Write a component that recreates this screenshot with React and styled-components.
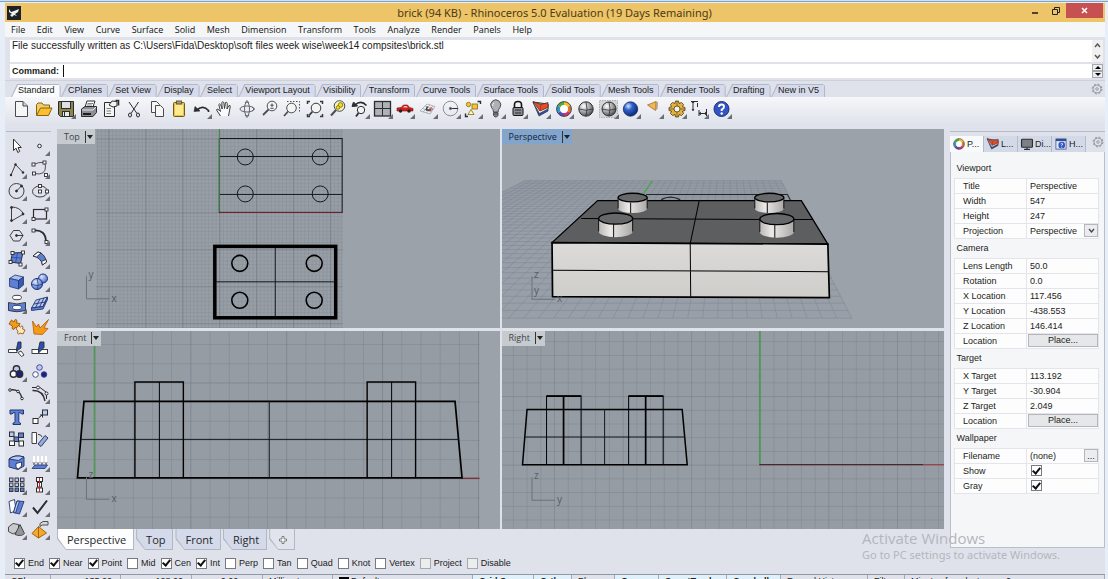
import React from "react";
import styled, { createGlobalStyle } from "styled-components";

const sans = `"Liberation Sans", Arial, sans-serif`;
const ui = `"Open Sans", "Noto Sans", sans-serif`;
const wide = `"Noto Sans", "Open Sans", sans-serif`;

const menuItems = [
  "File", "Edit", "View", "Curve", "Surface", "Solid", "Mesh", "Dimension",
  "Transform", "Tools", "Analyze", "Render", "Panels", "Help",
];

const toolTabs = [
  "Standard", "CPlanes", "Set View", "Display", "Select", "Viewport Layout",
  "Visibility", "Transform", "Curve Tools", "Surface Tools", "Solid Tools",
  "Mesh Tools", "Render Tools", "Drafting", "New in V5",
];

const snaps = [
  ["End", true], ["Near", true], ["Point", true], ["Mid", false],
  ["Cen", true], ["Int", true], ["Perp", false], ["Tan", false],
  ["Quad", false], ["Knot", false], ["Vertex", false],
  ["Project", false, true], ["Disable", false, true],
];

const statusCells = [
  { text: "CPlane", width: 46 },
  { text: "x 135.00", width: 70, align: "right" },
  { text: "y 128.00", width: 71, align: "right" },
  { text: "z 0.00", width: 71, align: "center" },
  { text: "Millimeters", width: 70 },
  { text: "Default", width: 140, swatch: true },
  { text: "Grid Snap", width: 61, on: true },
  { text: "Ortho", width: 38, on: true },
  { text: "Planar", width: 43 },
  { text: "Osnap", width: 44, on: true },
  { text: "SmartTrack", width: 68, on: true },
  { text: "Gumball", width: 54, on: true },
  { text: "Record History", width: 87 },
  { text: "Filter", width: 37 },
  { text: "Minutes from last save: 0", grow: true },
];

/* ---------- icons, all on a 22 x 22 field ---------- */

const ink = "#2b2d31";
const blue = "#5d80d6";
const pale = "#b9caf3";

const dots = (points, fill = "#fff") =>
  points.map(([x, y]) => (
    <rect key={`${x}-${y}`} x={x - 1.5} y={y - 1.5} width="3" height="3" fill={fill} stroke={ink} strokeWidth="0.9" />
  ));

const icons = {
  new: (
    <g fill="#f6f6f6" stroke="#4a4b4e">
      <path d="M5.5 3.5H13L17.5 8V18.5H5.5Z" />
      <path d="M13 3.5V8H17.5" fill="#cfd0d3" />
    </g>
  ),
  open: (
    <g stroke="#8a6414" strokeLinejoin="round">
      <path d="M3.5 17V6.5L5 5H9L10.5 7H16.5V10" fill="#f3cf63" />
      <path d="M3.5 17.5L7.5 10H19L15.5 17.5Z" fill="#f9bf2c" />
    </g>
  ),
  save: (
    <g stroke={ink}>
      <path d="M3.5 3.5H18.5V18.5H5.5L3.5 16.5Z" fill="#8c8648" />
      <rect x="6.5" y="3.5" width="9" height="7" fill="#dfe0e4" />
      <rect x="7.5" y="13.5" width="7" height="5" fill="#e9e9ec" />
      <path d="M9.5 14V18" />
    </g>
  ),
  print: (
    <g stroke={ink} strokeLinejoin="round">
      <path d="M7 9L9 3H17L15 9Z" fill="#fff" />
      <path d="M3.5 11L7 8.5H18.5V14.5L15 18.5H3.5Z" fill="#8d8f94" />
      <path d="M4 12H15L18 9" fill="none" stroke="#e8e8e8" />
      <path d="M5 16H13" stroke="#1c1c1c" strokeWidth="2" />
      <path d="M9.5 5.5H15M9 7H14" strokeWidth="0.6" />
    </g>
  ),
  properties: (
    <g stroke={ink} fill="#f4f4f4">
      <path d="M4.5 4.5H14.5V18.5H4.5Z" />
      <path d="M9 7L12 3L17 3.5V8L13 9L11 8Z" />
      <path d="M6.5 10.5H11M6.5 13H11M6.5 15.5H11" strokeWidth="0.6" />
      <path d="M15.5 2.5H18.5V7.5" strokeWidth="1.6" fill="none" />
    </g>
  ),
  cut: (
    <g fill="none" stroke={ink}>
      <path d="M6 4L14 15.5M15.5 4L8 15.5" />
      <ellipse cx="7" cy="17" rx="1.5" ry="2" />
      <ellipse cx="15" cy="17" rx="1.5" ry="2" />
    </g>
  ),
  copy: (
    <g stroke="#4a4b4e" fill="#f6f6f6">
      <path d="M5.5 3.5H10.5L13.5 6.5V14.5H5.5Z" />
      <path d="M9.5 7.5H14.5L17.5 10.5V18.5H9.5Z" />
    </g>
  ),
  paste: (
    <g stroke="#6d5a1c">
      <rect x="5.5" y="4.5" width="11" height="14" rx="1" fill="#e8c04a" />
      <rect x="7" y="6.5" width="8" height="10.5" fill="#fdea8c" stroke="none" />
      <rect x="8.5" y="3" width="5" height="3" fill="#9a9ca2" />
    </g>
  ),
  undo: (
    <g fill="none" stroke={ink} strokeWidth="1.7">
      <path d="M6 12Q12 6.5 17.5 12.5V14" />
      <path d="M3 13.5L4 8.5L9 13Z" fill={ink} strokeWidth="0.6" />
    </g>
  ),
  pan: (
    <path
      d="M7.5 18L3.5 12Q3.5 10 6 12L7.5 13.5L5.800 6.5Q6.5 5 7.8 7L9.2 11L8.8 4.5Q9.8 3 10.8 4.5L11.5 10.5L12.5 4.5Q13.8 3.5 14.3 5.5L14 11L16 7.5Q17.5 7 17.2 9L15.5 18"
      fill="#fafafa" stroke={ink} strokeWidth="0.9" strokeLinejoin="round"
    />
  ),
  rotate: (
    <g fill="none" stroke="#55575c" strokeWidth="0.9">
      <ellipse cx="11" cy="11" rx="7" ry="3" />
      <ellipse cx="11" cy="11" rx="2.5" ry="7" />
      <path d="M9 5L11 2.5L13 5M9 17L11 19.5L13 17M16 9L18.5 11L16 13" />
    </g>
  ),
  zoomDynamic: (
    <g fill="#f4f4f5" stroke="#4c4e52">
      <circle cx="13" cy="8" r="4.8" />
      <path d="M9.5 11.5L4 17" strokeWidth="1.8" />
      <path d="M13 5.5V9M11.3 7.2H14.7M11.3 10.3H14.7" />
    </g>
  ),
  zoomWindow: (
    <g fill="none" stroke="#4c4e52">
      <path d="M6 3.5H18.5V14" strokeDasharray="1.5 1.5" />
      <circle cx="10.5" cy="10" r="4.8" fill="#f4f4f5" />
      <path d="M7 13.5L3 18" strokeWidth="1.8" />
    </g>
  ),
  zoomExtents: (
    <g fill="none" stroke="#36383b">
      <circle cx="12" cy="10" r="4.8" fill="#f4f4f5" />
      <path d="M8.5 13.5L5 17.5" strokeWidth="1.8" />
      <path d="M3.5 6V3.5H6M16 3.5H18.5V6M18.5 16V18.5H16M3.5 16V18.5H6" strokeWidth="1.5" />
    </g>
  ),
  zoomSelected: (
    <g fill="none" stroke="#4c4e52">
      <circle cx="12.5" cy="8" r="5.3" fill="#f4f1c4" />
      <circle cx="13.5" cy="7" r="2.3" fill="#f5df16" stroke="#8f8314" />
      <circle cx="11" cy="9.5" r="1.8" fill="#f5df16" stroke="#8f8314" />
      <path d="M9 12L4 17.5" strokeWidth="2" />
    </g>
  ),
  undoView: (
    <g fill="none" stroke={ink}>
      <path d="M6 7Q12 1.5 17.5 7.5" strokeWidth="1.6" />
      <path d="M3 8.5L4.5 4L8.5 8Z" fill={ink} />
      <circle cx="12" cy="12" r="3.7" fill="#f4f4f5" />
      <path d="M9.5 15L7 18.5" strokeWidth="1.8" />
    </g>
  ),
  fourView: (
    <g fill="#aeb1b6" stroke={ink}>
      <rect x="2.5" y="3.5" width="16" height="14.5" strokeWidth="1.3" />
      <path d="M10.5 3.5V18M2.5 10.5H18.5" />
    </g>
  ),
  car: (
    <g>
      <path d="M3 12.5V10L7 9.5L9.5 7H13.5L15.5 9.5L19 10.5V13H3Z" fill="#d51f16" stroke="#7a120d" strokeWidth="0.6" />
      <path d="M9 9.5L10.2 8H12.8L13.8 9.5Z" fill="#f3c8c5" />
      <circle cx="6.5" cy="13" r="1.7" fill="#222" />
      <circle cx="15" cy="13" r="1.7" fill="#222" />
    </g>
  ),
  cplane: (
    <g fill="none" stroke="#a3a6ab" strokeWidth="0.8">
      <path d="M3 13L10 6L18 8.5L13 16ZM5.5 10.5L14.5 14M8 8L16 11.5M6 14L13 7M9.5 15L16 8" />
      <path d="M9 12L10.5 8.5M9 12H14" stroke="#37393d" strokeWidth="1.4" />
      <circle cx="14" cy="11" r="1.3" stroke="#c43" />
    </g>
  ),
  objectCircle: (
    <g fill="none" stroke="#8b8d92">
      <circle cx="10.5" cy="10.5" r="7.3" />
      <path d="M10.5 10.5H18" stroke={ink} />
      <circle cx="10.5" cy="10.5" r="1.2" fill={ink} />
    </g>
  ),
  select: (
    <g stroke="#8a6a10" strokeWidth="0.8" fill="#f4c531">
      <circle cx="6.5" cy="6.5" r="2.2" />
      <rect x="10" y="6" width="5.5" height="5" />
      <path d="M6 16.5L9 11.5L12 16.5Z" fill="#fff2c9" />
      <path d="M15.5 3.5H18.5V6M3.5 15.5V18.5H6" fill="none" stroke={ink} strokeWidth="1.4" />
    </g>
  ),
  bulb: (
    <g stroke="#4d4f53">
      <path d="M8.5 14Q8.5 11.5 6.5 9.5A5 5 0 1 1 15 9.5Q13 11.5 13 14Z" fill="#aeb0b4" />
      <path d="M8.5 14.5H13V17.5L11.5 19H10L8.5 17.5ZM8.5 16H13" fill="#85878b" />
      <path d="M9 5Q7.5 6 7.7 8" fill="none" stroke="#f5f5f5" />
    </g>
  ),
  lock: (
    <g stroke="#151515">
      <path d="M7.5 10V6.5Q7.5 3.5 11 3.5T14.5 6.5V10" fill="none" strokeWidth="1.6" />
      <rect x="6" y="9.5" width="10" height="8" rx="1" fill="#8b8d92" />
      <path d="M8 12H14M8 15H14" strokeWidth="0.8" />
    </g>
  ),
  layers: (
    <g stroke={ink} strokeWidth="0.7" strokeLinejoin="round">
      <path d="M3 4L9 18L18 13V6Z" fill="#2f4fb4" />
      <path d="M3 4.5L9.5 15.5L18 11V6Z" fill="#f6f2ef" />
      <path d="M3 3.5L11 6.5L18 4.5V9.5L10 13Z" fill="#ea4a25" />
      <path d="M11 6.5L10 12.5" stroke="#a12c10" />
    </g>
  ),
  colorWheel: (
    <g fill="none" strokeWidth="3.4">
      <path d="M11 5.5A5.5 5.5 0 0 1 15.8 8.3" stroke="#f0c419" />
      <path d="M15.8 8.3A5.5 5.5 0 0 1 15.8 13.8" stroke="#e2712a" />
      <path d="M15.8 13.8A5.5 5.5 0 0 1 11 16.5" stroke="#d22f72" />
      <path d="M11 16.5A5.5 5.5 0 0 1 6.2 13.8" stroke="#5a4ac0" />
      <path d="M6.2 13.8A5.5 5.5 0 0 1 6.2 8.3" stroke="#2b9bd0" />
      <path d="M6.2 8.3A5.5 5.5 0 0 1 11 5.5" stroke="#49ad3a" />
      <circle cx="11" cy="11" r="7.4" stroke="#333" strokeWidth="0.9" />
      <circle cx="11" cy="11" r="3.9" fill="#fff" stroke="none" />
    </g>
  ),
  sphere: (
    <g>
      <circle cx="11" cy="11" r="7.2" fill="url(#ball)" stroke="#333" />
      <path d="M4 11Q11 13.5 18 11M11 4Q13 11 11 18" fill="none" stroke="#333" strokeWidth="0.8" />
    </g>
  ),
  sphereBox: (
    <g>
      <rect x="1.5" y="2.5" width="18" height="17" fill="#d3d5d9" stroke="#a9acb2" strokeDasharray="1.5 1" />
      <circle cx="11" cy="11" r="7" fill="url(#ball)" stroke="#333" />
      <path d="M4 11Q11 13.5 18 11M11 4Q13 11 11 18" fill="none" stroke="#333" strokeWidth="0.8" />
    </g>
  ),
  sphereBlue: <circle cx="10.5" cy="11" r="7.2" fill="url(#ballBlue)" stroke="#122a66" strokeWidth="0.8" />,
  spot: (
    <g>
      <path d="M4.5 7L13 3.5L12.5 12.5Z" fill="#f4b64e" stroke="#8c6423" strokeWidth="0.7" />
      <path d="M13 3L15 4.5L14.5 11L12.5 12.5Z" fill="#b5a284" />
    </g>
  ),
  gear: (
    <g stroke="#4e3a0d" strokeWidth="0.8">
      <path
        d="M9.5 3H12.5L13 5.5L15.5 4.5L17.5 6.5L16.5 8.8L19 9.5V12.5L16.5 13L17.5 15.5L15.5 17.5L13 16.5L12.5 19H9.5L9 16.5L6.5 17.5L4.5 15.5L5.5 13L3 12.5V9.5L5.5 8.8L4.5 6.5L6.5 4.5L9 5.5Z"
        fill="#e3b23c"
      />
      <path d="M3 11H19M11 3V19" stroke="#7a5d18" />
      <circle cx="11" cy="11" r="3" fill="#f3f3f3" />
    </g>
  ),
  dimension: (
    <g fill="none" stroke={ink}>
      <path d="M3 3.5H10M5 3.5V12M9.5 5V9M11 12V18M11 15.5H19M18.5 11V18" />
      <path d="M4 5L5 3L6 5M4 11L5 13L6 11M13 14L11 15.5L13 17M17 14L19 15.5L17 17" fill={ink} strokeWidth="0.6" />
    </g>
  ),
  help: (
    <g>
      <circle cx="10.5" cy="11" r="7.5" fill="#3355c4" stroke="#1c2f77" />
      <path d="M8 9Q8 6.5 10.5 6.5T13 8.8Q13 10.5 10.7 11.5V13" fill="none" stroke="#fff" strokeWidth="1.9" />
      <circle cx="10.7" cy="15.5" r="1.2" fill="#fff" />
    </g>
  ),

  arrow: <path d="M7.5 4L7.5 15.5L10 13.2L11.8 17.5L13.7 16.5L12 12.5H15.3Z" fill="#fff" stroke="#333" />,
  point: <circle cx="10.5" cy="11" r="1.8" fill="#fff" stroke={ink} />,
  polyline: (
    <g fill={ink}>
      <path d="M5 17L9.5 6.5L17 14.5" fill="none" stroke={ink} strokeWidth="0.9" />
      <circle cx="5" cy="17" r="1.2" />
      <circle cx="9.5" cy="6.5" r="1.2" />
      <circle cx="17" cy="14.5" r="1.2" />
    </g>
  ),
  curve: (
    <g fill="none" stroke={ink}>
      <path d="M4.5 6.5Q16 1.5 16.5 8Q17 18 5 15.5" strokeWidth="0.8" />
      {dots([[4.5, 6.5], [15.5, 4.5], [17, 17], [5, 15.5]])}
    </g>
  ),
  circle: (
    <g fill="none" stroke={ink} strokeWidth="0.9">
      <circle cx="10.5" cy="11" r="7.5" />
      <path d="M10.5 11L15.5 6" />
      <circle cx="10.5" cy="11" r="1" fill={ink} />
      <circle cx="15.5" cy="6" r="1" fill={ink} />
    </g>
  ),
  ellipse: (
    <g fill="none" stroke={ink}>
      <ellipse cx="11" cy="11.5" rx="7.5" ry="5.5" strokeWidth="0.9" />
      {dots([[11, 6], [11, 11.5], [18, 11.5]])}
    </g>
  ),
  arc: (
    <g fill="none" stroke={ink} strokeWidth="0.9">
      <path d="M5.5 4Q14 4 17.5 11L5.5 18Z" />
      <circle cx="5.5" cy="4.5" r="1" fill={ink} />
      <circle cx="17" cy="11" r="1" fill={ink} />
      <circle cx="5.5" cy="17.5" r="1" fill={ink} />
    </g>
  ),
  rectangle: (
    <g fill="none" stroke={ink}>
      <rect x="4.5" y="6.5" width="13" height="9.5" strokeWidth="1.2" />
      {dots([[17.5, 6.5], [4.5, 16]])}
    </g>
  ),
  polygon: (
    <g fill="none" stroke={ink} strokeWidth="0.9">
      <path d="M4 10.5L7.5 5.5H13.5L17 10.5L13.5 16H7.5Z" />
      <path d="M10.5 10.5H17" />
      <circle cx="10.5" cy="10.5" r="1" fill={ink} />
    </g>
  ),
  fillet: (
    <g fill="none" stroke={ink}>
      <path d="M5 5.5Q16.5 4.5 17 16.5" strokeWidth="1.8" />
      {dots([[4.5, 5.5], [17.5, 17]])}
    </g>
  ),
  surface: (
    <g stroke={ink}>
      <path d="M6.5 5L17 4.5L14.5 15.5L4.5 14Z" fill={blue} />
      <path d="M5.5 9.5L16 10M11.5 5L9.5 15" stroke="#27408a" strokeWidth="0.7" />
      {dots([[6.5, 5], [17, 4.5], [14.5, 16.5], [4.5, 14]])}
    </g>
  ),
  surfaceCurve: (
    <g stroke={ink} strokeWidth="0.9">
      <path d="M4 8L9 4Q15.5 5 17.5 14L13.5 17Q12 9.5 4 8Z" fill={blue} />
      <path d="M4 8L9 4L12 5L7.5 9Z" fill="#fff" />
      <path d="M13.5 17L12.5 13.5L17 11.5L17.5 14Z" fill="#fff" />
    </g>
  ),
  box: (
    <g stroke="#22366f" strokeWidth="0.8" strokeLinejoin="round">
      <path d="M3.5 7.5L9 4L17.5 6L12.5 9.5Z" fill="#a9c0f5" />
      <path d="M3.5 7.5L12.5 9.5V18L3.5 15.5Z" fill={blue} />
      <path d="M12.5 9.5L17.5 6V14L12.5 18Z" fill="#3859b0" />
    </g>
  ),
  union: (
    <g stroke="#1c3478">
      <circle cx="14" cy="7.500" r="4.5" fill="url(#ballSoft)" />
      <circle cx="8" cy="13" r="5.5" fill="url(#ballSoft)" />
      <path d="M3 13.5Q8 16 13.5 13M8 7.5Q10 13 8.5 18.5" fill="none" strokeWidth="0.7" />
    </g>
  ),
  project: (
    <g stroke={ink} strokeWidth="0.9">
      <ellipse cx="11" cy="4.5" rx="4.5" ry="2.2" fill="#fff" />
      <path d="M2.5 9.5Q11 12.5 19.5 9.5V17.5Q11 20 2.5 17.5Z" fill={blue} />
      <ellipse cx="11" cy="14.5" rx="4.5" ry="2.2" fill="#fff" stroke="#22366f" />
    </g>
  ),
  mesh: (
    <g stroke="#22366f" strokeWidth="0.9">
      <path d="M2.5 15L7 7L18.5 4L14 13.5Z" fill={pale} />
      <path d="M5 11L16 9M6.5 14.5L11 6M10.5 14L15 5" fill="none" />
      <path d="M2.5 15V17.5L14 16L18.5 6.5V4L14 13.5Z" fill={blue} />
    </g>
  ),
  puzzle: (
    <g stroke="#8a4b05" strokeWidth="0.8">
      <path d="M3 8L5.5 4L8 6Q9 2 11 4.5L10.5 7L14 7.5L12 12L9 11.5Q8 15 6 12.5L6.5 10Z" fill="#f39a16" />
      <path d="M10 13L12 9.5L14.5 11Q16.5 8.5 17 11L16.5 13L19 14L17 18L14 17Q12.500 19.5 11.5 17L12 15Z" fill="#fde9bd" />
    </g>
  ),
  explode: <path d="M5 18L3.500 5L7.5 11L9.5 8L11 12L19.5 3.5L15 12L19 12.5L13.5 18.5Z" fill="#f39a16" stroke="#b85a08" strokeWidth="0.8" />,
  trim: (
    <g stroke={ink} strokeWidth="0.9">
      <path d="M2.5 11.5H11V14.5H2.5Z" fill="#fff" />
      <path d="M12 4H15V10L10.5 13V11Z" fill="#2c4fb4" />
      <path d="M12 14.5L15 13L18 17L15.5 18.5Z" fill="#fff" />
    </g>
  ),
  split: (
    <g stroke={ink} strokeWidth="0.9">
      <rect x="3" y="11.5" width="15.5" height="4" fill="#fff" />
      <path d="M11 4H15V9.5L9.5 15V11Z" fill="#2c4fb4" />
    </g>
  ),
  group: (
    <g stroke={ink} strokeWidth="1.4">
      <circle cx="10.5" cy="8" r="3.2" fill={pale} />
      <circle cx="7.5" cy="13" r="3.2" fill="#fff" />
      <circle cx="13.5" cy="13" r="3.2" fill="#1a237e" />
    </g>
  ),
  ungroup: (
    <g stroke="#3b3e8f" strokeWidth="0.9">
      <circle cx="10.5" cy="6.5" r="2.8" fill={pale} />
      <circle cx="6.5" cy="13.5" r="2.8" fill="#fff" />
      <circle cx="15" cy="13.5" r="2.8" fill="#1a237e" />
    </g>
  ),
  editPoints: (
    <g fill="#fff" stroke={ink}>
      <path d="M3.5 7Q14 5 16 16" fill="none" strokeWidth="1.4" />
      <circle cx="4" cy="7" r="1.3" />
      <circle cx="12" cy="8.5" r="1.3" />
      <circle cx="16" cy="15.5" r="1.3" />
    </g>
  ),
  controlPoints: (
    <g fill="#fff" stroke={ink}>
      <path d="M3.5 7.5Q14 7 16 18" fill="none" strokeWidth="1.4" />
      <path d="M3 4.5H7M11 4.5L17 9M17.500 12V16" fill="none" />
      <circle cx="9" cy="4.5" r="1.5" />
      <circle cx="17.5" cy="10.5" r="1.5" />
    </g>
  ),
  text: <path d="M4 4H17.5V8H15.5Q15 6.5 12.8 6.5V15.5Q13 17 14.5 17V18.5H7V17Q9 17 9 15.5V6.5Q6.5 6.5 6 8H4Z" fill={blue} stroke="#22366f" />,
  move: (
    <g stroke={ink}>
      <rect x="4" y="12.5" width="5" height="5" fill="#fff" />
      <rect x="13.5" y="4" width="5" height="5" fill={pale} />
      <path d="M9.5 12L13 9" />
      <path d="M11 9H13.5V11.500" fill="none" />
    </g>
  ),
  copyObjects: (
    <g stroke={ink}>
      <rect x="3.5" y="4" width="4.5" height="4.5" fill={pale} />
      <rect x="12.5" y="5" width="5" height="4.5" fill={blue} />
      <rect x="8" y="9" width="4.5" height="4.5" fill={blue} />
      <rect x="3.5" y="13" width="5" height="4.5" fill="#fff" />
      <rect x="13" y="13" width="4.5" height="5" fill="#fff" />
    </g>
  ),
  rotateObject: (
    <g stroke={ink} strokeWidth="0.9">
      <path d="M3 4.5H7.5V15.5H3Z" fill="#fff" />
      <path d="M9 16L16 7.5L19 10L12 18.5Z" fill="#8fabec" />
      <path d="M9 6.5Q12 6 13 9" fill="none" />
    </g>
  ),
  solidEdit: (
    <g stroke="#1c2c60" strokeWidth="0.9">
      <path d="M3 8Q9 3 18 6V15L12 18.5L3 16Z" fill={blue} />
      <path d="M3 8Q9 3 18 6L12.5 9.5Z" fill={pale} />
      <path d="M10 12.5L15.5 11V15L12.500 18L10 16.5Z" fill="#fff" />
    </g>
  ),
  flow: (
    <g>
      <path d="M3 17.5L6 14H18.5L16 17.5Z" fill={blue} stroke="#22366f" strokeWidth="0.8" />
      <path d="M5 5V13M9 5V13M13 5V13M17 5V13" stroke="#fff" strokeWidth="2" />
      <path d="M4 11L5 14L6 11M8 11L9 14L10 11M12 11L13 14L14 11M16 11L17 14L18 11" stroke="#555" strokeWidth="0.7" fill="none" />
    </g>
  ),
  array: (
    <g stroke={ink} strokeWidth="0.9">
      {[4, 9, 14].map((y) =>
        [3.5, 9, 14.5].map((x) => (
          <rect key={`${x}-${y}`} x={x} y={y} width="3.5" height="3.5" fill={y === 14 ? blue : pale} />
        ))
      )}
    </g>
  ),
  align: (
    <g stroke={ink}>
      <rect x="7.5" y="3.5" width="6" height="4" fill="#fff" />
      <rect x="8.5" y="8.5" width="4" height="4.5" fill="#fff" />
      <rect x="7.5" y="14" width="6" height="4" fill="#fff" />
      <path d="M10.5 4V18" stroke="#d02424" />
    </g>
  ),
  sheets: (
    <g stroke="#22366f" strokeWidth="0.9">
      <path d="M3 5.5L8.5 3.5L10 14.5L4.5 17Z" fill="#fff" />
      <path d="M11 5L18 5.5L13.5 18L7.5 16.5Z" fill={blue} />
      <path d="M11 5L13.500 5.2L9.5 17L7.500 16.5Z" fill={pale} />
    </g>
  ),
  check: <path d="M4 11.5L8.5 17L18 4.5" fill="none" stroke={ink} strokeWidth="2" />,
  solids: (
    <g stroke="#3a3b3e" strokeWidth="0.9">
      <path d="M2.5 8L7 4.5L12.5 5.5V12L7 15L2.5 12.5Z" fill="#c9cacd" />
      <path d="M14 5.5L18.5 14.5Q15 18 9 15.5Z" fill="#93959a" />
    </g>
  ),
  render: (
    <g stroke="#4d4f53">
      <path d="M3 14.5L9.5 7.5L17.5 14L9.5 19Z" fill="#f3a92f" stroke="#a76508" />
      <path d="M9.5 7.5V19" stroke="#a76508" />
      <path d="M11 4.5L14 2.5H19V6H13L11 7.5Z" fill="#d6d8dc" />
    </g>
  ),
  monitor: (
    <g>
      <rect x="3.5" y="4.5" width="15" height="11" rx="1" fill="#7d8187" stroke={ink} strokeWidth="1.6" />
      <path d="M7 18.5H15M11 16V18" stroke={ink} strokeWidth="1.6" />
    </g>
  ),
  helpPage: (
    <g>
      <rect x="4" y="4" width="14" height="14" fill="#dfe6f6" stroke="#31508f" />
      <rect x="4" y="4" width="14" height="3" fill="#31508f" />
      <rect x="7.5" y="8" width="9" height="9" rx="4" fill="#3355c4" />
      <path d="M10.5 11Q12 9 13.5 11L12 13V14M12 15V16" fill="none" stroke="#fff" strokeWidth="1.2" />
    </g>
  ),
};

// second value: has a fly-out marker in the corner
const mainTools = [
  ["new"], ["open"], ["save", 1], ["print"], ["properties"], ["cut"], ["copy"],
  ["paste"], ["undo", 1], ["pan"], ["rotate"], ["zoomDynamic"], ["zoomWindow"],
  ["zoomExtents"], ["zoomSelected"], ["undoView", 1], ["fourView", 1],
  ["car", 1], ["cplane", 1], ["objectCircle", 1], ["select", 1], ["bulb", 1],
  ["lock", 1], ["layers", 1], ["colorWheel", 1], ["sphere"], ["sphereBox", 1],
  ["sphereBlue", 1], ["spot", 1], ["gear", 1], ["dimension", 1], ["help", 1],
];

const sideTools = [
  ["arrow"], ["point", 1], ["polyline", 1], ["curve", 1], ["circle", 1],
  ["ellipse", 1], ["arc", 1], ["rectangle", 1], ["polygon", 1], ["fillet", 1],
  ["surface", 1], ["surfaceCurve", 1], ["box", 1], ["union", 1],
  ["project", 1], ["mesh", 1], ["puzzle"], ["explode"], ["trim"], ["split"],
  ["group", 1], ["ungroup"], ["editPoints"], ["controlPoints", 1], ["text"],
  ["move", 1], ["copyObjects"], ["rotateObject"], ["solidEdit", 1],
  ["flow", 1], ["array", 1], ["align", 1], ["sheets", 1], ["check", 1],
  ["solids", 1], ["render", 1],
];

const Icon = ({ name, flyout, size = 22 }) => (
  <svg width={size} height={size} viewBox="0 0 22 22" aria-hidden="true">
    {icons[name]}
    {flyout && <path d="M21 16V21H16Z" fill="#6b6e74" />}
  </svg>
);

const Gear = () => (
  <svg width="12" height="12" viewBox="0 0 12 12" fill="none" stroke="#8a8e95">
    <circle cx="6" cy="6" r="4.9" strokeDasharray="2 1.85" />
    <circle cx="6" cy="6" r="4" strokeWidth="0.8" />
    <circle cx="6" cy="6" r="1.3" strokeWidth="0.8" />
  </svg>
);

/* ---------- viewport drawings ---------- */

const Axes = ({ x, y, up, across, inner }) => (
  <g>
    <path d={`M${x} ${y - 23}V${y}H${x + 23}`} fill="none" stroke="#6b727b" />
    <AxisText x={x + 2} y={y - 21}>{up}</AxisText>
    {inner && <AxisText x={x + 2} y={y - 5}>{inner}</AxisText>}
    <AxisText x={x + 25} y={y + 3}>{across}</AxisText>
  </g>
);

const GridPattern = ({ id, x, y, step, major, minorOpacity }) => (
  <defs>
    <pattern id={`${id}-minor`} x={x} y={y} width={step} height={step} patternUnits="userSpaceOnUse">
      <path d={`M0 0V${step}M0 0H${step}`} stroke="#5d656f" strokeWidth="1" opacity={minorOpacity} />
    </pattern>
    <pattern id={`${id}-major`} x={x} y={y} width={major} height={major} patternUnits="userSpaceOnUse">
      <path d={`M0 0V${major}M0 0H${major}`} stroke="#4d555f" strokeWidth="1.2" opacity="0.5" />
    </pattern>
  </defs>
);

const TopDrawing = () => (
  <Drawing viewBox="57 129 443 230">
    <GridPattern id="top" x={219.5} y={212.5} step={3.7} major={37} minorOpacity={0.3} />
    <rect x="96" y="129" width="247" height="230" fill="#979ea6" />
    <rect x="96" y="129" width="247" height="230" fill="url(#top-minor)" />
    <rect x="96" y="129" width="247" height="230" fill="url(#top-major)" />
    <g fill="none" stroke="#15171a">
      <rect x="219.5" y="138.5" width="123" height="74" />
      <path d="M219.5 156.5H342.5M219.5 194.5H342.5" />
      {[245.5, 320.5].map((x) => [157, 194].map((y) => <circle key={`${x}-${y}`} cx={x} cy={y} r="8" />))}
      <path d="M219.5 129V212" stroke="#3d8a45" />
      <path d="M220 212.5H342" stroke="#6e2a30" />
      <rect x="215" y="246.5" width="121" height="71.5" strokeWidth="3.5" stroke="#000" />
      <path d="M275.5 248V317M216 282H335" />
      {[240, 314.5].map((x) =>
        [263.5, 300.5].map((y) => <circle key={`${x}-${y}`} cx={x} cy={y} r="8" strokeWidth="1.6" stroke="#000" />)
      )}
    </g>
    <Axes x={86.5} y={299} up="y" across="x" />
  </Drawing>
);

const FrontDrawing = () => (
  <Drawing viewBox="57 331 443 230">
    <GridPattern id="front" x={94.5} y={478.5} step={19.2} major={96} minorOpacity={0.45} />
    <rect x="57" y="331" width="423" height="230" fill="#959ca4" />
    <rect x="57" y="331" width="423" height="230" fill="url(#front-minor)" />
    <rect x="57" y="331" width="423" height="230" fill="url(#front-major)" opacity="0.5" />
    <path d="M94.500 331V478" stroke="#4a9a50" strokeWidth="1.5" />
    <path d="M462 478.5H480" stroke="#7d333b" strokeWidth="1.4" />
    <g fill="none" stroke="#000">
      <path d="M84 401.5H455.5L462.5 478H77.5Z" strokeWidth="1.7" />
      <path d="M80.5 439.5H459M269.5 401V478" stroke="#15171a" />
      {[135, 367.5].map((x) => (
        <g key={x}>
          <path d={`M${x} 478V382H${x + 48.5}V478`} strokeWidth="1.4" />
          <path d={`M${x + 24.5} 382V478`} />
        </g>
      ))}
    </g>
    <Axes x={86.5} y={499.5} up="z" across="x" />
  </Drawing>
);

const RightDrawing = () => (
  <Drawing viewBox="502 331 442 230">
    <GridPattern id="right" x={759.5} y={464.5} step={13.7} major={68.5} minorOpacity={0.45} />
    <rect x="502" y="331" width="442" height="230" fill="#959ca4" />
    <rect x="502" y="331" width="442" height="230" fill="url(#right-minor)" />
    <rect x="502" y="331" width="442" height="230" fill="url(#right-major)" opacity="0.3" />
    <path d="M759.5 331V464" stroke="#4a9a50" strokeWidth="1.7" />
    <path d="M759 464.5H923" stroke="#4f262d" strokeWidth="1.3" />
    <path d="M923 464.5H944" stroke="#9c444c" strokeWidth="1.3" />
    <g fill="none" stroke="#000">
      <path d="M527 409.5H682L687 464.5H522.5Z" strokeWidth="1.5" />
      <path d="M525 437H684.5M604.5 409V464" stroke="#15171a" />
      {[546.5, 628.5].map((x) => (
        <g key={x}>
          <path d={`M${x} 464V396H${x + 34.5}V464`} />
          <path d={`M${x} 396H${x + 34.5}M${x + 17} 396V464`} strokeWidth="1.7" />
        </g>
      ))}
    </g>
    <Axes x={532} y={500} up="z" across="y" />
  </Drawing>
);

// ground plane in one point perspective, eye line at y = 77
const eye = { x: 728, y: 77 };
const far = 103.5;
const near = 241;
const cells = 40;

const groundLines = () => {
  const lines = [];
  for (let i = 0; i <= cells; i++) {
    const x = 525 + (256 * i) / cells;
    const k = near / far;
    lines.push(`M${x} ${eye.y + far}L${eye.x + (x - eye.x) * k} ${eye.y + near}`);
    const t = 1 / (1 / far + ((1 / near - 1 / far) * i) / cells);
    const left = eye.x + ((525 - eye.x) * t) / far;
    const right = eye.x + ((781 - eye.x) * t) / far;
    lines.push(`M${left} ${eye.y + t}H${right}`);
  }
  return lines.join("");
};

const studs = [
  { x: 632.5, y: 197.5, rx: 14.5, ry: 4.3, h: 11 },
  { x: 769, y: 197.5, rx: 14.5, ry: 4.3, h: 11 },
  { x: 615.5, y: 218.5, rx: 17, ry: 5.6, h: 13 },
  { x: 776.5, y: 219, rx: 17, ry: 5.6, h: 13 },
];

const PerspectiveDrawing = () => (
  <Drawing viewBox="502 129 442 230">
    <defs>
      <linearGradient id="stud" x1="0" x2="1">
        <stop offset="0" stopColor="#b9b8b7" />
        <stop offset="0.35" stopColor="#eceae8" />
        <stop offset="1" stopColor="#a9a8a7" />
      </linearGradient>
      <linearGradient id="face" x1="0" x2="0" y1="0" y2="1">
        <stop offset="0" stopColor="#dddbd9" />
        <stop offset="1" stopColor="#cfcdca" />
      </linearGradient>
    </defs>
    <path d="M525 180.5H781L852 318H255Z" fill="#989fa8" />
    <path d={groundLines()} stroke="#747c86" strokeWidth="0.6" opacity="0.6" fill="none" />
    <path d="M652 181L643 194" stroke="#4ca550" strokeWidth="1.5" />
    <g fill="none" stroke="#23262a">
      <path d="M646 194.5H787L790 200" />
      <path d="M661 199.5Q670 194.5 680 199.5" strokeWidth="1.3" />
    </g>
    <path d="M597.5 200.5L801 200.5L827.5 244L552 242.5Z" fill="#5d5e60" stroke="#000" strokeWidth="1.3" />
    <path d="M552 242.5L827.5 244L829 297.5L552.5 296.5Z" fill="url(#face)" stroke="#000" strokeWidth="1.7" />
    <path d="M581 218.5L812 219.5M699 200.5L690 243.5L690.5 297M552 270L828.5 271.5" fill="none" stroke="#000" />
    {studs.map(({ x, y, rx, ry, h }) => (
      <g key={`${x}-${y}`}>
        <path d={`M${x - rx} ${y}V${y + h}A${rx} ${ry} 0 0 0 ${x + rx} ${y + h}V${y}Z`} fill="url(#stud)" />
        <path d={`M${x - rx} ${y}V${y + h}M${x + rx} ${y}V${y + h}M${x - 2} ${y + 5}V${y + h + ry}`} stroke="#111" />
        <ellipse cx={x} cy={y} rx={rx} ry={ry} fill="#67686a" stroke="#000" strokeWidth="1.3" />
      </g>
    ))}
    <Axes x={532} y={299} up="z" across="x" inner="y" />
  </Drawing>
);

const View = ({ title, active, children }) => (
  <ViewBox>
    {children}
    <ViewLabel $active={active}>
      {title}
      <ViewArrow />
    </ViewLabel>
  </ViewBox>
);

/* ---------- properties panel ---------- */

const sections = [
  {
    title: "Viewport",
    rows: [
      ["Title", "Perspective"],
      ["Width", "547"],
      ["Height", "247"],
      ["Projection", "Perspective", "select"],
    ],
  },
  {
    title: "Camera",
    rows: [
      ["Lens Length", "50.0"],
      ["Rotation", "0.0"],
      ["X Location", "117.456"],
      ["Y Location", "-438.553"],
      ["Z Location", "146.414"],
      ["Location", "Place...", "button"],
    ],
  },
  {
    title: "Target",
    rows: [
      ["X Target", "113.192"],
      ["Y Target", "-30.904"],
      ["Z Target", "2.049"],
      ["Location", "Place...", "button"],
    ],
  },
  {
    title: "Wallpaper",
    rows: [
      ["Filename", "(none)", "file"],
      ["Show", "", "check"],
      ["Gray", "", "check"],
    ],
  },
];

const Value = ({ id, label, value, kind }) => {
  if (kind === "select")
    return (
      <SelectBox>
        <PropSelect id={id} defaultValue={value}>
          <option>{value}</option>
        </PropSelect>
        <SelectMark>
          <svg width="7" height="5" viewBox="0 0 7 5"><path d="M1 1L3.5 4L6 1" fill="none" stroke="#444" strokeWidth="1.3" /></svg>
        </SelectMark>
      </SelectBox>
    );
  if (kind === "button") return <PlaceButton id={id}>{value}</PlaceButton>;
  if (kind === "check") return <Check id={id} type="checkbox" defaultChecked />;
  if (kind === "file")
    return (
      <FileBox>
        <PropInput id={id} defaultValue={value} />
        <BrowseButton aria-label={`Browse ${label}`}>...</BrowseButton>
      </FileBox>
    );
  return <PropInput id={id} defaultValue={value} />;
};

const Properties = () => (
  <Panel>
    <PanelTabs>
      <PanelTab $active><Icon name="colorWheel" size={16} />P...</PanelTab>
      <PanelTab><Icon name="layers" size={16} />L...</PanelTab>
      <PanelTab><Icon name="monitor" size={16} />Di...</PanelTab>
      <PanelTab><Icon name="helpPage" size={16} />H...</PanelTab>
      <GearButton aria-label="Panel options"><Gear /></GearButton>
    </PanelTabs>
    <PanelBody>
      <PropTable>
        {sections.map((section) => (
          <tbody key={section.title}>
            <tr>
              <SectionCell colSpan="2" scope="rowgroup">{section.title}</SectionCell>
            </tr>
            {section.rows.map(([label, value, kind]) => {
              const id = `${section.title}-${label}`.replace(" ", "-");
              return (
                <tr key={label}>
                  <NameCell scope="row"><label htmlFor={id}>{label}</label></NameCell>
                  <ValueCell><Value id={id} label={label} value={value} kind={kind} /></ValueCell>
                </tr>
              );
            })}
          </tbody>
        ))}
      </PropTable>
    </PanelBody>
  </Panel>
);

const App = () => {
  return (
    <Desktop>
      <GlobalStyle />
      <Shades width="0" height="0">
        <defs>
          <radialGradient id="ball" cx="0.35" cy="0.3" r="0.8">
            <stop offset="0" stopColor="#fff" />
            <stop offset="0.5" stopColor="#a3a5a9" />
            <stop offset="1" stopColor="#3a3b3e" />
          </radialGradient>
          <radialGradient id="ballBlue" cx="0.35" cy="0.3" r="0.8">
            <stop offset="0" stopColor="#d4e4ff" />
            <stop offset="0.35" stopColor="#2e62cf" />
            <stop offset="1" stopColor="#0a1c5c" />
          </radialGradient>
          <radialGradient id="ballSoft" cx="0.35" cy="0.3" r="0.8">
            <stop offset="0" stopColor="#dce6ff" />
            <stop offset="1" stopColor="#3c61c0" />
          </radialGradient>
        </defs>
      </Shades>
      <Window>
        <TitleBar>
          <svg width="14" height="14" viewBox="0 0 14 14">
            <rect width="14" height="14" fill="#202124" />
            <path d="M2 3L4 6L7 5L12 3L11 6L8 8L10 10L7 9L5 11L3 9L5 8L2 6Z" fill="#f1f1f1" />
          </svg>
          <WindowTitle>brick (94 KB) - Rhinoceros 5.0 Evaluation (19 Days Remaining)</WindowTitle>
          <WindowButtons>
            <WindowButton aria-label="Minimize">
              <svg width="8" height="8" viewBox="0 0 8 8"><path d="M1 6H7" stroke="#222" strokeWidth="1.6" /></svg>
            </WindowButton>
            <WindowButton aria-label="Restore">
              <svg width="8" height="8" viewBox="0 0 8 8"><path d="M0.5 2.5H5.5V7.5H0.5ZM2.5 2V0.5H7.5V5.5H6" fill="none" stroke="#222" /></svg>
            </WindowButton>
            <WindowButton aria-label="Close" $close>
              <svg width="7" height="7" viewBox="0 0 7 7"><path d="M1 1L6 6M6 1L1 6" stroke="#fff" strokeWidth="1.5" /></svg>
            </WindowButton>
          </WindowButtons>
        </TitleBar>

        <MenuBar>
          <MenuList>
            {menuItems.map((item) => <MenuItem key={item}>{item}</MenuItem>)}
          </MenuList>
        </MenuBar>

        <CommandArea>
          <History>
            File successfully written as C:\Users\Fida\Desktop\soft files week wise\week14 compsites\brick.stl
            <ScrollMarks>
              <svg width="7" height="5" viewBox="0 0 7 5"><path d="M1 4L3.5 1L6 4" fill="none" stroke="#555" strokeWidth="1.4" /></svg>
              <svg width="7" height="5" viewBox="0 0 7 5"><path d="M1 1L3.5 4L6 1" fill="none" stroke="#555" strokeWidth="1.4" /></svg>
            </ScrollMarks>
          </History>
          <Prompt>
            <label htmlFor="command">Command:</label>
            <Caret />
            <PromptInput id="command" />
            <Spinner>
              <SpinButton aria-label="Previous command"><svg width="6" height="3" viewBox="0 0 6 3"><path d="M0 3L3 0L6 3Z" /></svg></SpinButton>
              <SpinButton aria-label="Next command"><svg width="6" height="3" viewBox="0 0 6 3"><path d="M0 0L3 3L6 0Z" /></svg></SpinButton>
            </Spinner>
          </Prompt>
        </CommandArea>

        <ToolTabs>
          <ToolTabList>
            {toolTabs.map((tab, i) => <ToolTab key={tab} $active={i === 0}>{tab}</ToolTab>)}
          </ToolTabList>
          <GearButton aria-label="Toolbar options"><Gear /></GearButton>
        </ToolTabs>

        <Toolbar>
          <ToolRow>
            {mainTools.map(([name, flyout]) => (
              <ToolButton key={name} aria-label={name}><Icon name={name} flyout={flyout} /></ToolButton>
            ))}
          </ToolRow>
        </Toolbar>

        <Main>
          <SideBar>
            {sideTools.map(([name, flyout]) => (
              <ToolButton key={name} aria-label={name}><Icon name={name} flyout={flyout} /></ToolButton>
            ))}
          </SideBar>
          <Center>
            <Views>
              <View title="Top"><TopDrawing /></View>
              <View title="Perspective" active><PerspectiveDrawing /></View>
              <View title="Front"><FrontDrawing /></View>
              <View title="Right"><RightDrawing /></View>
            </Views>
            <ViewTabs>
              <ViewTab $active>Perspective</ViewTab>
              <ViewTab>Top</ViewTab>
              <ViewTab>Front</ViewTab>
              <ViewTab>Right</ViewTab>
              <ViewTab $plain aria-label="New viewport tab">
                <svg width="8" height="8" viewBox="0 0 8 8"><path d="M3 0.5H5V3H7.5V5H5V7.5H3V5H0.5V3H3Z" fill="#fff" stroke="#666" strokeWidth="0.8" /></svg>
              </ViewTab>
            </ViewTabs>
          </Center>
          <Properties />
        </Main>

        <SnapBar>
          {snaps.map(([label, on, muted]) => (
            <Snap key={label}>
              <Check type="checkbox" defaultChecked={on} $muted={muted} />
              {label}
            </Snap>
          ))}
        </SnapBar>

        <StatusBar>
          {statusCells.map(({ text, width, align, on, grow, swatch }) => (
            <StatusCell key={text} $width={width} $align={align} $on={on} $grow={grow}>
              {swatch && <Swatch />}
              {text}
            </StatusCell>
          ))}
        </StatusBar>

        <Watermark>
          <WatermarkTitle>Activate Windows</WatermarkTitle>
          <WatermarkText>Go to PC settings to activate Windows.</WatermarkText>
        </Watermark>
      </Window>
    </Desktop>
  );
};

const GlobalStyle = createGlobalStyle`
  * {
    box-sizing: border-box;
  }
  body {
    margin: 0;
    overflow: hidden;
    font: 9px/12px ${sans};
    color: #1b1c20;
  }
  button, input, select {
    margin: 0;
    padding: 0;
    border: 0;
    background: none;
    font: inherit;
    color: inherit;
    border-radius: 0;
  }
  svg {
    display: block;
    flex: none;
  }
`;

const Shades = styled.svg`
  position: absolute;
`;

const Desktop = styled.div`
  height: 100vh;
  padding: 3px 3px 0 5px;
  background: linear-gradient(#cfe2f2 0 1px, #7fa3c8 1px 2px, #e8eef8 2px);
  overflow: hidden;
`;

const Window = styled.div`
  position: relative;
  height: 100%;
  display: flex;
  flex-direction: column;
  background: #dfe2eb;
`;

const TitleBar = styled.header`
  flex: none;
  display: flex;
  align-items: center;
  height: 19px;
  padding: 0 2px;
  background: #edc467;
`;

const WindowTitle = styled.h1`
  flex: 1;
  margin: 0;
  padding-left: 64px;
  text-align: center;
  font: 400 11px/16px ${wide};
  color: #4a3b16;
`;

const WindowButtons = styled.div`
  display: flex;
  align-self: flex-start;
`;

const WindowButton = styled.button`
  display: flex;
  align-items: center;
  justify-content: center;
  width: ${(props) => (props.$close ? "37px" : "21px")};
  height: 15px;
  background: ${(props) => (props.$close ? "#c75050" : "transparent")};
`;

const MenuBar = styled.nav`
  flex: none;
  padding-left: 6px;
  background: #f5f6f7;
`;

const MenuList = styled.div`
  display: flex;
  justify-content: space-between;
  max-width: 521px;
  height: 15px;
`;

const MenuItem = styled.button`
  font: 9px/15px ${ui};
  color: #111;
`;

const CommandArea = styled.section`
  flex: none;
  display: flex;
  flex-direction: column;
  gap: 2px;
  padding: 3px 2px 2px 5px;
`;

const History = styled.div`
  display: flex;
  justify-content: space-between;
  height: 22px;
  padding-left: 2px;
  font-size: 10px;
  background: #fff;
`;

const ScrollMarks = styled.div`
  display: flex;
  flex-direction: column;
  align-items: center;
  justify-content: space-around;
  width: 11px;
  background: #f0f0f0;
`;

const Prompt = styled.div`
  display: flex;
  align-items: center;
  height: 14px;
  padding-left: 2px;
  background: #fff;
  font-weight: 700;
`;

const Caret = styled.span`
  width: 1px;
  height: 12px;
  margin-left: 4px;
  background: #111;
`;

const PromptInput = styled.input`
  flex: 1;
  height: 12px;
  outline: 0;
`;

const Spinner = styled.div`
  display: flex;
  flex-direction: column;
  width: 11px;
`;

const SpinButton = styled.button`
  display: flex;
  align-items: center;
  justify-content: center;
  height: 7px;
  border: 1px solid #a5a8ae;
  background: #eee;
`;

const ToolTabs = styled.div`
  flex: none;
  display: flex;
  align-items: flex-end;
  height: 17px;
  padding: 0 2px 0 6px;
  border-top: 1px solid #cdd1dc;
  background: #dfe2eb;
`;

const ToolTabList = styled.div`
  flex: 1;
  display: flex;
  justify-content: space-between;
  max-width: 814px;
`;

const ToolTab = styled.button`
  position: relative;
  z-index: 0;
  height: 13px;
  padding: 0 6px 0 7px;
  line-height: 13px;
  background: #b1b8c9;
  clip-path: polygon(6px 0, calc(100% - 2px) 0, 100% 2px, 100% 100%, 0 100%);

  &::before {
    content: "";
    position: absolute;
    z-index: -1;
    inset: 1px 1px 0;
    background: ${(props) => (props.$active ? "#fafbfc" : "#d6daea")};
    clip-path: polygon(6px 0, 100% 0, 100% 100%, 0 100%);
  }
`;

const GearButton = styled.button`
  align-self: center;
  margin-left: auto;
`;

const Toolbar = styled.div`
  flex: none;
  padding: 1px 5px 5px;
  background: linear-gradient(#f6f7f9, #dfe2eb);
`;

const ToolRow = styled.div`
  display: flex;
  justify-content: space-between;
  max-width: 723px;
`;

const ToolButton = styled.button`
  display: flex;
  align-items: center;
  justify-content: center;
  width: 22px;
  height: 22px;
`;

const Main = styled.main`
  flex: 1;
  min-height: 0;
  display: grid;
  grid-template-columns: 46px minmax(0, 1fr) 155px;
  column-gap: 6px;
`;

const SideBar = styled.div`
  display: grid;
  grid-template-columns: 23px 23px;
  grid-auto-rows: 1fr;
  align-items: center;
  margin: 6px 0 11px 1px;
  padding-top: 3px;
  border-top: 1px solid #b3bac8;
`;

const Center = styled.div`
  display: flex;
  flex-direction: column;
  min-height: 0;
  padding: 4px 0 2px;
`;

const Views = styled.div`
  flex: 1;
  min-height: 0;
  display: grid;
  grid-template-columns: 1fr 1fr;
  grid-template-rows: 1fr 1fr;
  gap: 3px 2px;
`;

const ViewBox = styled.section`
  position: relative;
  min-width: 0;
  min-height: 0;
  overflow: hidden;
  background: #9ba2aa;
`;

const Drawing = styled.svg.attrs({ preserveAspectRatio: "xMinYMin slice" })`
  width: 100%;
  height: 100%;
`;

const AxisText = styled.text`
  font: 10px ${ui};
  fill: #565d66;
`;

const ViewLabel = styled.button`
  position: absolute;
  top: 0;
  left: 0;
  display: flex;
  align-items: center;
  gap: 5px;
  height: 15px;
  padding: 0 2px 0 7px;
  font: 9px/14px ${ui};
  color: ${(props) => (props.$active ? "#14233a" : "#3f4349")};
  background: ${(props) => (props.$active ? "#83a5cc" : "#c6cbd0")};
`;

const ViewArrow = styled.span`
  display: flex;
  align-items: center;
  height: 12px;
  border-left: 1px solid #333;

  &::after {
    content: "";
    margin-left: 1px;
    border: 3px solid transparent;
    border-top: 4px solid #222;
    border-bottom: 0;
  }
`;

const ViewTabs = styled.div`
  flex: none;
  display: flex;
  gap: 2px;
`;

const ViewTab = styled.button`
  position: relative;
  z-index: 0;
  height: 21px;
  padding: 0 8px 0 10px;
  font: 11px/20px ${ui};
  color: #26282c;
  background: #b0b7c6;
  clip-path: polygon(0 0, 100% 0, 100% 100%, 9px 100%, 0 10px);

  &::before {
    content: "";
    position: absolute;
    z-index: -1;
    inset: 0 1px 1px;
    background: ${(props) => (props.$active ? "#fdfdfe" : props.$plain ? "#e1e4ec" : "#d4daea")};
    clip-path: polygon(0 0, 100% 0, 100% 100%, 8px 100%, 0 9px);
  }
`;

const Panel = styled.aside`
  display: flex;
  flex-direction: column;
  min-height: 0;
  margin: 6px 0 4px;
  border-top: 1px solid #b3bac8;
`;

const PanelTabs = styled.div`
  display: flex;
  align-items: flex-end;
  height: 20px;
  padding-right: 1px;
`;

const PanelTab = styled.button`
  display: flex;
  align-items: center;
  width: 34px;
  height: 16px;
  padding-left: 1px;
  border-right: 1px solid #b3bac8;
  background: ${(props) => (props.$active ? "#f8f9fb" : "#d4d9e8")};
`;

const PanelBody = styled.div`
  flex: 1;
  padding: 6px 5px 0 3px;
  border: 1px solid #b9c0cc;
  border-top: 0;
  background: #f5f6f8;
`;

const PropTable = styled.table`
  width: 100%;
  border-collapse: collapse;
  table-layout: fixed;
`;

const SectionCell = styled.th`
  height: 20px;
  padding: 0 0 0 2px;
  text-align: left;
  font-weight: 400;
  background: #f5f6f8;
`;

const NameCell = styled.th`
  width: 50%;
  height: 15px;
  padding: 0 0 0 8px;
  text-align: left;
  font-weight: 400;
  line-height: 14px;
  white-space: nowrap;
  background: #fdfdfe;
  border: 1px solid #e3e5ea;
`;

const ValueCell = styled.td`
  height: 15px;
  padding: 0 0 0 1px;
  background: #fdfdfe;
  border: 1px solid #e3e5ea;
`;

const PropInput = styled.input`
  display: block;
  width: 100%;
  height: 13px;
  padding-left: 2px;
`;

const SelectBox = styled.div`
  display: grid;
  grid-template-columns: 1fr 14px;
`;

const PropSelect = styled.select`
  grid-area: 1 / 1 / 2 / 3;
  height: 13px;
  padding-left: 2px;
  appearance: none;
`;

const SelectMark = styled.span`
  grid-area: 1 / 2;
  display: flex;
  align-items: center;
  justify-content: center;
  border: 1px solid #b4b6bb;
  background: #ececee;
  pointer-events: none;
`;

const PlaceButton = styled.button`
  display: block;
  width: 100%;
  height: 13px;
  line-height: 11px;
  border: 1px solid #b4b6bb;
  background: #e6e7e9;
`;

const FileBox = styled.div`
  display: flex;
`;

const BrowseButton = styled.button`
  flex: none;
  width: 14px;
  height: 13px;
  line-height: 8px;
  border: 1px solid #b4b6bb;
  background: #ececee;
`;

const Check = styled.input`
  appearance: none;
  flex: none;
  display: flex;
  align-items: center;
  justify-content: center;
  width: 11px;
  height: 11px;
  margin-left: ${(props) => (props.id ? "3px" : "0")};
  border: 1px solid ${(props) => (props.$muted ? "#a6a9ae" : "#777a80")};
  background: ${(props) => (props.$muted ? "#eceded" : "#fff")};

  &:checked::before {
    content: "";
    width: 3px;
    height: 6px;
    border: solid #111;
    border-width: 0 2px 2px 0;
    transform: translateY(-1px) rotate(40deg);
  }
`;

const SnapBar = styled.div`
  flex: none;
  display: flex;
  align-items: center;
  gap: 5px;
  height: 22px;
  padding-left: 9px;
`;

const Snap = styled.label`
  display: flex;
  align-items: center;
  gap: 3px;
`;

const StatusBar = styled.footer`
  flex: none;
  display: flex;
  height: 20px;
  margin-bottom: -15px;
  border-top: 1px solid #8f97a5;
`;

const StatusCell = styled.div`
  display: flex;
  align-items: flex-start;
  justify-content: ${(props) => props.$align || "flex-start"};
  flex: ${(props) => (props.$grow ? "1" : "none")};
  width: ${(props) => (props.$width ? `${props.$width}px` : "auto")};
  padding: 0 8px 0 6px;
  white-space: nowrap;
  border-right: 1px solid #a3abb9;
  font-weight: ${(props) => (props.$on ? "700" : "400")};
  background: ${(props) => (props.$on ? "#e1f1fb" : "transparent")};
`;

const Swatch = styled.span`
  width: 10px;
  height: 10px;
  margin: 2px 2px 0 0;
  background: #000;
`;

const Watermark = styled.div`
  position: absolute;
  right: 45px;
  bottom: 16px;
  pointer-events: none;
  color: #b3b6bc;
`;

const WatermarkTitle = styled.div`
  font: 15px/18px ${ui};
`;

const WatermarkText = styled.div`
  font: 11px/16px ${wide};
`;

export default App;
